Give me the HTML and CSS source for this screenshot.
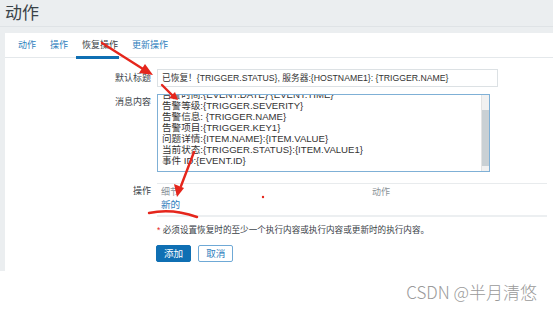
FILE: index.html
```html
<!DOCTYPE html>
<html lang="zh">
<head>
    <meta charset="UTF-8">
    <title>动作</title>
    <link rel="stylesheet" href="styles.css">
</head>
<body>

<div class="screen">
    <div class="page-head">
        <h1 class="page-head_title">动作</h1>
    </div>

    <div class="card">
        <div class="tabs">
            <a class="tabs_item">动作</a>
            <a class="tabs_item">操作</a>
            <a class="tabs_item active">恢复操作</a>
            <a class="tabs_item">更新操作</a>
        </div>

        <div class="form">
            <div class="form-row form-row--first">
                <label class="form-row_label">默认标题</label>
                <div class="input">已恢复！{TRIGGER.STATUS}, 服务器:{HOSTNAME1}: {TRIGGER.NAME}</div>
            </div>

            <div class="form-row form-row--text">
                <label class="form-row_label">消息内容</label>
                <div class="textarea">
                    <div class="textarea_text">
                        <div>告警时间:{EVENT.DATE} {EVENT.TIME}</div>
                        <div>告警等级:{TRIGGER.SEVERITY}</div>
                        <div>告警信息: {TRIGGER.NAME}</div>
                        <div>告警项目:{TRIGGER.KEY1}</div>
                        <div>问题详情:{ITEM.NAME}:{ITEM.VALUE}</div>
                        <div>当前状态:{TRIGGER.STATUS}:{ITEM.VALUE1}</div>
                        <div>事件 ID:{EVENT.ID}</div>
                    </div>
                    <div class="scrollbar"><div class="scrollbar_thumb"></div></div>
                </div>
            </div>

            <div class="form-row form-row--ops">
                <label class="form-row_label">操作</label>
                <div class="ops">
                    <div class="ops_head">
                        <span class="ops_col">细节</span>
                        <span class="ops_col">动作</span>
                    </div>
                    <a class="ops_new">新的</a>
                </div>
            </div>

            <div class="note"><span class="note_star">*</span> 必须设置恢复时的至少一个执行内容或执行内容或更新时的执行内容。</div>

            <div class="buttons">
                <button class="btn btn--primary">添加</button>
                <button class="btn">取消</button>
            </div>
        </div>
    </div>
</div>

<div class="watermark">CSDN @半月清悠</div>

<svg class="marks" width="553" height="309" viewBox="0 0 553 309">
    <g stroke="#e5261c" stroke-width="2.4" fill="none" stroke-linecap="round">
        <line x1="102" y1="43" x2="143" y2="69"/>
        <line x1="162" y1="85" x2="172" y2="95"/>
        <line x1="194" y1="152" x2="181" y2="186"/>
        <path d="M149 213 Q 172 208 197 217"/>
    </g>
    <g fill="#e5261c">
        <polygon points="153,75 139,73 145,64"/>
        <polygon points="178,100 169,98 175,92"/>
        <polygon points="177,197 174,184 184,188"/>
        <circle cx="263" cy="197" r="1.2"/>
    </g>
</svg>

</body>
</html>
```

FILE: styles.css
```css
body {
    margin: 0;
    background: #fff;
    font-family: "Liberation Sans", "Noto Sans CJK SC", sans-serif;
    color: #1f2c33;
    width: 553px;
    height: 309px;
    position: relative;
    overflow: hidden;
}

.screen {
    background: #ebeef0;
    height: 271px;
    padding-left: 5px;
    display: flex;
    flex-direction: column;
}

.page-head {
    height: 26px;
    border-bottom: 1px solid #dfe3e6;
    margin-bottom: 6px;
    margin-left: -5px;
}

.page-head_title {
    margin: 0;
    padding: 4px 0 0 5px;
    font-size: 17px;
    font-weight: normal;
    line-height: 20px;
    color: #3a4248;
}

.card {
    flex: 1;
    background: #fff;
}

.tabs {
    display: flex;
    height: 24px;
    padding-left: 6px;
    border-bottom: 1px solid #e4e8eb;
}

.tabs_item {
    padding: 0 7px;
    font-size: 9px;
    line-height: 24px;
    color: #2f80bd;
    position: relative;
}

.tabs_item.active {
    color: #3a4248;
}

.tabs_item.active:after {
    content: "";
    position: absolute;
    left: 1px;
    right: 6px;
    bottom: -2px;
    height: 3px;
    background: #0f6fb3;
}

.form-row {
    display: grid;
    grid-template-columns: 146px 1fr;
    column-gap: 6px;
    align-items: start;
}

.form-row--first {
    margin-top: 11px;
}

.form-row--text {
    margin-top: 7px;
}

.form-row--ops {
    margin-top: 11px;
}

.form-row_label {
    text-align: right;
    font-size: 9px;
    color: #3a4248;
}

.form-row--first .form-row_label {
    line-height: 18px;
}

.form-row--text .form-row_label {
    line-height: 16px;
}

.form-row--ops .form-row_label {
    line-height: 16px;
}

.input {
    width: 331px;
    height: 16px;
    border: 1px solid #dce1e4;
    padding: 0 4px;
    font-size: 8.7px;
    line-height: 16px;
    white-space: nowrap;
    overflow: hidden;
    color: #333;
}

.textarea {
    width: 331px;
    height: 76px;
    border: 1px solid #7fb0d6;
    display: flex;
    overflow: hidden;
}

.textarea_text {
    flex: 1;
    padding-left: 4px;
    margin-top: -6px;
    font-size: 9.6px;
    line-height: 11px;
    color: #333;
    white-space: nowrap;
    overflow: hidden;
}

.scrollbar {
    width: 7px;
    background: #f1f1f1;
    padding-top: 15px;
    border-left: 1px solid #e3e3e3;
}

.scrollbar_thumb {
    height: 56px;
    background: #c9d0d4;
}

.ops {
    width: 390px;
    height: 31px;
    border-top: 1px solid #e8ebed;
    border-bottom: 2px solid #eceff1;
    display: flex;
    flex-direction: column;
    align-items: flex-start;
}

.ops_head {
    display: flex;
    height: 14px;
    padding: 1px 0 0 4px;
    font-size: 9px;
    line-height: 14px;
    color: #8a9197;
}

.ops_col:first-child {
    width: 211px;
}

.ops_new {
    margin-left: 4px;
    font-size: 9.6px;
    line-height: 12px;
    color: #2f80bd;
    border-bottom: 1px solid #8fbde0;
}

.note {
    margin: 7px 0 0 152px;
    font-size: 8.6px;
    line-height: 12px;
    color: #3a4248;
}

.note_star {
    color: #e5261c;
}

.buttons {
    display: flex;
    gap: 7px;
    margin: 9px 0 0 151px;
}

.btn {
    height: 17px;
    padding: 0 7px;
    border: 1px solid #6fa9d6;
    border-radius: 2px;
    background: #fff;
    color: #2f80bd;
    font-family: inherit;
    font-size: 9.6px;
    line-height: 15px;
}

.btn--primary {
    background: #0f6fb3;
    border-color: #0f6fb3;
    color: #fff;
}

.watermark {
    text-align: right;
    padding-right: 16px;
    margin-top: 10px;
    font-family: "Noto Sans CJK SC", sans-serif;
    font-size: 17px;
    font-weight: 300;
    line-height: 22px;
    color: #9a9a9a;
}

.marks {
    position: absolute;
    left: 0;
    top: 0;
    pointer-events: none;
}
```
